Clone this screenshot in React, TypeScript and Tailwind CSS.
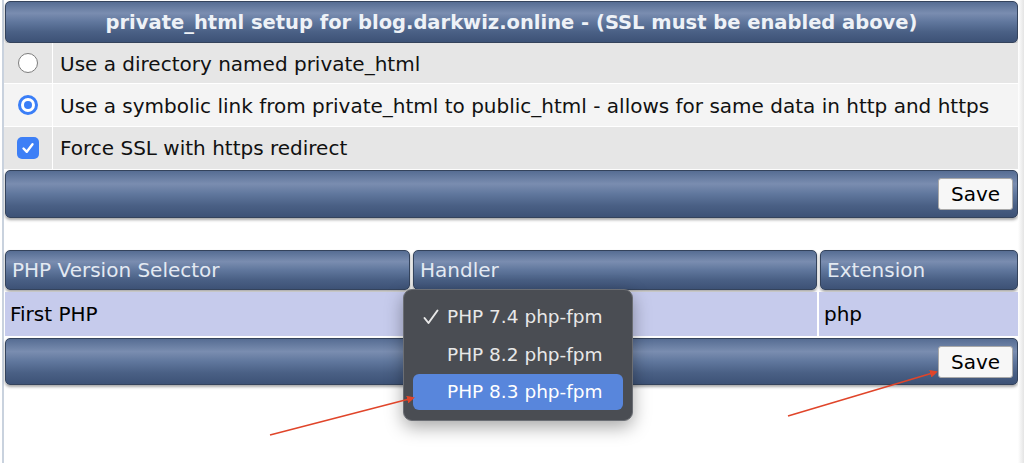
import React from "react";

const bar =
  "bg-[linear-gradient(to_bottom,#566d93_0%,#7a8db0_28%,#60779d_50%,#4a6085_75%,#3d5276_100%)] border border-[#34435c] rounded-[5px] shadow-[0_2px_3px_rgba(0,0,0,0.35)]";

function SaveBtn() {
  return (
    <button className="h-[32px] w-[75px] bg-[#f7f7f7] border border-[#a9a9a9] rounded-[3px] text-[20px] text-black flex items-center justify-center">
      Save
    </button>
  );
}

export default function App() {
  return (
    <div
      className="relative w-[1024px] h-[463px] bg-white overflow-hidden flex"
      style={{ fontFamily: '"DejaVu Sans", Verdana, sans-serif' }}
    >
      <div className="w-[2px] bg-white" />
      <div className="w-[2px] bg-[#c9d2de]" />
      <div className="flex-1 flex flex-col pt-[1px]">
        {/* title bar */}
        <div className={`${bar} ml-[1px] h-[42px] flex items-center justify-center pt-[2px]`}>
          <span className="text-[19.5px] font-bold text-[#eef2f7]">
            private_html setup for blog.darkwiz.online - (SSL must be enabled above)
          </span>
        </div>
        {/* rows */}
        <div className="flex flex-col gap-[1px] bg-white">
          <div className="flex h-[40px] bg-[#e6e6e6]">
            <div className="w-[48px] flex items-center justify-center">
              <div className="w-[20px] h-[20px] rounded-full border border-[#7d7d7d] bg-white" />
            </div>
            <div className="w-[1px] bg-white" />
            <div className="flex-1 flex items-center pl-[7px] pt-[2px] text-[20px] text-[#111]">
              Use a directory named private_html
            </div>
          </div>
          <div className="flex h-[42px] bg-[#f4f4f4]">
            <div className="w-[48px] flex items-center justify-center">
              <div className="w-[20px] h-[20px] rounded-full border-[3px] border-[#3a7ef7] bg-white flex items-center justify-center">
                <div className="w-[8px] h-[8px] rounded-full bg-[#3a7ef7]" />
              </div>
            </div>
            <div className="w-[1px] bg-white" />
            <div className="flex-1 flex items-center pl-[7px] pt-[2px] text-[20px] text-[#111] whitespace-nowrap">
              Use a symbolic link from private_html to public_html - allows for same data in http and https
            </div>
          </div>
          <div className="flex h-[42px] bg-[#e6e6e6]">
            <div className="w-[48px] flex items-center justify-center">
              <div className="w-[22px] h-[22px] rounded-[5px] bg-[#3d7ff6] flex items-center justify-center">
                <svg width="14" height="14" viewBox="0 0 14 14">
                  <path d="M2.5 7.5 L5.8 10.8 L11.5 3.2" stroke="white" strokeWidth="2.4" fill="none" strokeLinecap="round" strokeLinejoin="round" />
                </svg>
              </div>
            </div>
            <div className="w-[1px] bg-white" />
            <div className="flex-1 flex items-center pl-[7px] text-[20px] text-[#111]">
              Force SSL with https redirect
            </div>
          </div>
        </div>
        {/* save bar 1 */}
        <div className={`${bar} ml-[1px] mt-[1px] h-[48px] flex items-center justify-end pr-[4px]`}>
          <SaveBtn />
        </div>
        <div className="h-[32px]" />
        {/* table header */}
        <div className="flex gap-[3px] ml-[1px] h-[40px]">
          <div className={`${bar} w-[405px] flex items-center pl-[6px] text-[20px] text-[#e3e9f2]`}>
            PHP Version Selector
          </div>
          <div className={`${bar} w-[404px] flex items-center pl-[6px] text-[20px] text-[#e3e9f2]`}>
            Handler
          </div>
          <div className={`${bar} flex-1 flex items-center pl-[6px] text-[20px] text-[#e3e9f2]`}>
            Extension
          </div>
        </div>
        {/* data row */}
        <div className="flex mt-[2px] h-[44px] bg-[#c6cbec] ml-[1px]">
          <div className="w-[406px] flex items-center pl-[5px] text-[20px] text-black">First PHP</div>
          <div className="w-[2px] bg-white" />
          <div className="w-[404px]" />
          <div className="w-[2px] bg-white" />
          <div className="flex-1 flex items-center pl-[5px] text-[20px] text-black">php</div>
        </div>
        {/* save bar 2 */}
        <div className={`${bar} ml-[1px] mt-[2px] h-[47px] flex items-center justify-end pr-[4px]`}>
          <SaveBtn />
        </div>
      </div>
      <div className="w-[6px] bg-[linear-gradient(to_right,#ffffff,#e4e4e4)]" />

      {/* dropdown menu */}
      <div className="absolute left-[403px] top-[289px] w-[230px] h-[132px] rounded-[9px] bg-[#4a4d53] border border-[#6b6e74] shadow-[0_6px_18px_rgba(0,0,0,0.35)] px-[9px] pt-[8px] flex flex-col text-[18.5px]">
        <div className="h-[38px] flex items-center text-[#e8e8e8]">
          <span className="w-[34px] pl-[10px] flex items-center">
            <svg width="16" height="16" viewBox="0 0 16 16">
              <path d="M1.5 9 L5.5 14 L14.5 1.5" stroke="#e8e8e8" strokeWidth="2" fill="none" strokeLinecap="round" strokeLinejoin="round" />
            </svg>
          </span>
          <span>PHP 7.4 php-fpm</span>
        </div>
        <div className="h-[38px] flex items-center text-[#e8e8e8]">
          <span className="w-[34px]" />
          <span>PHP 8.2 php-fpm</span>
        </div>
        <div className="h-[36px] flex items-center text-white bg-[#5886dc] rounded-[6px]">
          <span className="w-[34px]" />
          <span>PHP 8.3 php-fpm</span>
        </div>
      </div>

      {/* arrows */}
      <svg className="absolute left-0 top-0 pointer-events-none" width="1024" height="463">
        <defs>
          <marker id="ah" markerWidth="8" markerHeight="8" refX="6" refY="4" orient="auto" markerUnits="userSpaceOnUse">
            <path d="M0 0 L8 4 L0 8 Z" fill="#e0452a" />
          </marker>
        </defs>
        <line x1="270" y1="435" x2="413" y2="398" stroke="#e0452a" strokeWidth="1.6" markerEnd="url(#ah)" />
        <line x1="788" y1="416" x2="936" y2="372" stroke="#e0452a" strokeWidth="1.6" markerEnd="url(#ah)" />
      </svg>
    </div>
  );
}
